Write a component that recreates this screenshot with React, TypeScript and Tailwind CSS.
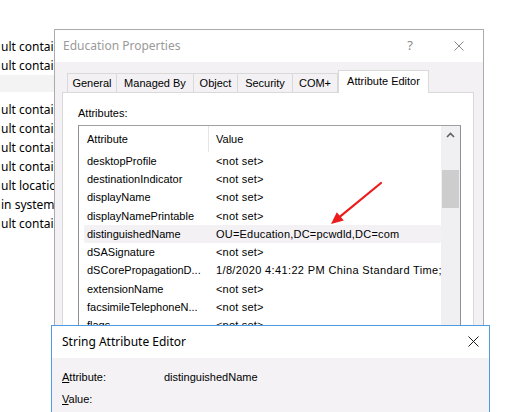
import React from 'react';

const sys = { fontFamily: '"Liberation Sans", Arial, sans-serif' };
const ui = { fontFamily: '"Noto Sans", "Open Sans", sans-serif' };

const behind = [
  'ult container',
  'ult container',
  null,
  'ult container',
  'ult container',
  'ult container',
  'ult container',
  'ult location',
  'in system',
  'ult container',
];

const tabs = [
  { label: 'General', w: 'w-[50px]' },
  { label: 'Managed By', w: 'w-[78px]' },
  { label: 'Object', w: 'w-[45px]' },
  { label: 'Security', w: 'w-[56px]' },
  { label: 'COM+', w: 'w-[46px]' },
];

const rows: [string, string][] = [
  ['desktopProfile', '<not set>'],
  ['destinationIndicator', '<not set>'],
  ['displayName', '<not set>'],
  ['displayNamePrintable', '<not set>'],
  ['distinguishedName', 'OU=Education,DC=pcwdld,DC=com'],
  ['dSASignature', '<not set>'],
  ['dSCorePropagationD...', '1/8/2020 4:41:22 PM China Standard Time; 12/31/1600 4:00:00 PM'],
  ['extensionName', '<not set>'],
  ['facsimileTelephoneN...', '<not set>'],
  ['flags', '<not set>'],
  ['garbageCollPeriod', '<not set>'],
];

const BackgroundList: React.FC = () => (
  <div className="w-[54px] overflow-hidden pt-[37px] text-[12px] text-black" style={ui}>
    {behind.map((t, i) =>
      t === null ? (
        <div key={i} className="h-[17px] mb-[8px] bg-[#f3f3f3]" />
      ) : (
        <div key={i} className="h-[19px] leading-[19px] pl-[1px] whitespace-nowrap">
          {t}
        </div>
      )
    )}
  </div>
);

const PropertiesDialog: React.FC = () => (
  <div className="absolute left-[54px] top-[29px] w-[430px] h-[420px] border border-[#ababab] bg-[#f3f1f4] flex flex-col">
    <div className="h-[32px] bg-white flex items-center pl-[8px] shrink-0">
      <span className="text-[12px] text-[#9a9a9a]" style={ui}>
        Education Properties
      </span>
      <span className="ml-auto mr-[41px] text-[13px] text-[#8a8a8a]" style={ui}>
        ?
      </span>
      <svg width="10" height="10" viewBox="0 0 10 10" className="mr-[19px]">
        <path d="M0.5 0.5 L9.5 9.5 M9.5 0.5 L0.5 9.5" stroke="#8a8a8a" strokeWidth="1" />
      </svg>
    </div>

    <div className="flex items-end pl-[12px] pt-[8px] text-[11px] text-black" style={sys}>
      {tabs.map((t, i) => (
        <div
          key={t.label}
          className={`${t.w} h-[19px] ${i > 0 ? '-ml-px' : ''} border border-b-0 border-[#d9d9d9] flex items-center justify-center leading-none`}
        >
          {t.label}
        </div>
      ))}
      <div className="w-[91px] h-[23px] -mb-px relative z-10 bg-white border border-b-0 border-[#d9d9d9] flex justify-center pt-[4px] leading-[13px]">
        Attribute Editor
      </div>
    </div>

    <div className="ml-[7px] w-[412px] flex-1 bg-white border border-[#d9d9d9] pl-[15px] pt-[14px] text-[11px] text-black" style={sys}>
      <div className="leading-[13px]">Attributes:</div>
      <div className="mt-[5px] w-[383px] h-[300px] border border-[#8f9098] border-t-[#a0a0a0] flex">
        <div className="w-[362px] overflow-hidden">
          <div className="h-[26px] flex items-center">
            <div className="w-[130px] h-full border-r border-[#e5e5e5] pl-[8px] flex items-center">Attribute</div>
            <div className="pl-[7px]">Value</div>
          </div>
          {rows.map(([name, value]) => (
            <div
              key={name}
              className={`ml-[5px] h-[18.25px] flex items-center whitespace-nowrap rounded-[2px] ${
                name === 'distinguishedName' ? 'bg-[#f3f1f4]' : ''
              }`}
            >
              <div className="w-[125px] pl-[3px] shrink-0 overflow-hidden">{name}</div>
              <div className={`pl-[7px] ${value.startsWith('1/8') ? 'tracking-[0.36px]' : 'tracking-[0.2px]'}`}>
                {value}
              </div>
            </div>
          ))}
        </div>
        <div className="w-[19px] bg-[#f0eff1] flex flex-col">
          <div className="h-[17px] flex items-center justify-center">
            <svg width="9" height="6" viewBox="0 0 9 6">
              <path d="M1 5 L4.5 1.5 L8 5" stroke="#606060" strokeWidth="1.6" fill="none" />
            </svg>
          </div>
          <div className="mt-[27px] mx-px h-[38px] bg-[#cdcdcd]" />
        </div>
      </div>
    </div>
  </div>
);

const StringEditor: React.FC = () => (
  <div className="absolute left-[51px] top-[325px] w-[439px] h-[120px] border border-[#4c9be3] bg-[#f4f2f5] flex flex-col">
    <div className="h-[32px] bg-white flex items-center pl-[10px] shrink-0">
      <span className="text-[12px] text-black" style={ui}>
        String Attribute Editor
      </span>
      <svg width="11" height="11" viewBox="0 0 11 11" className="ml-auto mr-[10px] mb-[2px]">
        <path d="M0.5 0.5 L10.5 10.5 M10.5 0.5 L0.5 10.5" stroke="#1a1a1a" strokeWidth="1" />
      </svg>
    </div>
    <div className="pl-[10px] pt-[13px] text-[11px] text-black leading-[13px]" style={sys}>
      <div className="flex">
        <div className="w-[102px]">
          <span className="underline">A</span>ttribute:
        </div>
        <div>distinguishedName</div>
      </div>
      <div className="mt-[9px]">
        <span className="underline">V</span>alue:
      </div>
    </div>
  </div>
);

const Arrow: React.FC = () => (
  <svg className="absolute left-[325px] top-[178px]" width="62" height="52" viewBox="0 0 62 52">
    <line x1="56" y1="5" x2="15.3" y2="38.4" stroke="#ec1c1c" strokeWidth="2.2" strokeLinecap="round" />
    <polygon points="6,46 18.8,42.6 11.8,34.2" fill="#ec1c1c" />
  </svg>
);

export default function App() {
  return (
    <div className="relative w-[511px] h-[412px] overflow-hidden bg-white">
      <BackgroundList />
      <PropertiesDialog />
      <Arrow />
      <StringEditor />
    </div>
  );
}
